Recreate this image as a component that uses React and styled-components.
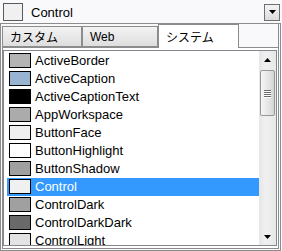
import React from "react";
import styled, { createGlobalStyle } from "styled-components";

const GlobalStyle = createGlobalStyle`
  html, body {
    margin: 0;
    padding: 0;
    background: #ffffff;
  }
  body {
    font-family: "Liberation Sans", "Noto Sans CJK JP", sans-serif;
    color: #000;
  }
`;

const Page = styled.div`
  width: 282px;
  height: 251px;
  background: #f9f9fc;
  overflow: hidden;
`;

const ComboBar = styled.div`
  display: flex;
  align-items: center;
  height: 23px;
  padding: 0 2px 0 3px;
  box-sizing: border-box;
`;

const BigSwatch = styled.div`
  width: 20px;
  height: 18px;
  box-sizing: border-box;
  border: 1px solid #5a5a5a;
  background: ${(p) => p.$color};
`;

const ComboText = styled.div`
  flex: 1;
  margin-left: 8px;
  padding-top: 2px;
  font-size: 13px;
`;

const DropButton = styled.div`
  width: 16px;
  height: 17px;
  margin-top: 1px;
  box-sizing: border-box;
  border: 1px solid #707070;
  background: linear-gradient(#f4f4f4, #dcdcdc);
  display: flex;
  align-items: center;
  justify-content: center;
`;

const Frame = styled.div`
  width: 281px;
  height: 228px;
  box-sizing: border-box;
  border: 1px solid #8c8c8c;
  padding: 0 1px 1px 1px;
  display: flex;
  flex-direction: column;
`;

const TabStrip = styled.div`
  flex: none;
  display: flex;
  align-items: flex-end;
  height: 23px;
  border-right: 1px solid #8c8c8c;
`;

const Tab = styled.div`
  position: relative;
  z-index: 1;
  box-sizing: border-box;
  width: ${(p) => p.$w}px;
  height: ${(p) => (p.$active ? 24 : 21)}px;
  margin-bottom: ${(p) => (p.$active ? -1 : 0)}px;
  padding-left: 7px;
  display: flex;
  align-items: center;
  font-size: 12px;
  border: 1px solid #8c8c8c;
  border-bottom: ${(p) => (p.$active ? "none" : "1px solid #8c8c8c")};
  background: ${(p) =>
    p.$active ? "#ffffff" : "linear-gradient(#f3f3f3, #dedede)"};
`;

const Panel = styled.div`
  flex: 1;
  min-height: 0;
  display: flex;
  flex-direction: column;
  border: 1px solid #8c8c8c;
  background: #ffffff;
  padding: 2px 1px 2px 0;
`;

const List = styled.div`
  flex: 1;
  min-height: 0;
  display: flex;
  border: 1px solid #828790;
  background: #ffffff;
  overflow: hidden;
`;

const Rows = styled.div`
  flex: 1;
  padding: 1px 0 0 3px;
  overflow: hidden;
`;

const Row = styled.div`
  display: flex;
  align-items: flex-start;
  height: 18px;
  padding-left: 2px;
  background: ${(p) => (p.$selected ? "#3399ff" : "transparent")};
  color: ${(p) => (p.$selected ? "#ffffff" : "#000000")};
`;

const Swatch = styled.div`
  flex: none;
  width: 22px;
  height: 15px;
  margin-top: 1px;
  box-sizing: border-box;
  border: 1px solid #000;
  background: ${(p) => p.$color};
`;

const Label = styled.div`
  margin-left: 4px;
  font-size: 13px;
  line-height: 18px;
  white-space: nowrap;
`;

const ScrollBar = styled.div`
  width: 17px;
  display: flex;
  flex-direction: column;
  align-items: center;
  background: linear-gradient(90deg, #e6e6e6, #f0f0f0 40%, #e8e8e8);
`;

const ArrowButton = styled.div`
  flex: none;
  height: 17px;
  width: 17px;
  display: flex;
  align-items: center;
  justify-content: center;
`;

const Thumb = styled.div`
  flex: none;
  width: 15px;
  height: 46px;
  margin-top: 2px;
  box-sizing: border-box;
  border: 1px solid #979797;
  border-radius: 2px;
  background: linear-gradient(90deg, #f6f6f6, #e6e6e6 50%, #d6d6d6);
  display: flex;
  flex-direction: column;
  align-items: center;
  justify-content: center;
  gap: 1px;
`;

const Grip = styled.div`
  width: 7px;
  height: 1px;
  background: #6a6a6a;
  box-shadow: 0 1px 0 #ffffff;
`;

const Track = styled.div`
  flex: 1;
`;

const Triangle = ({ up }) => (
  <svg width="7" height="4" viewBox="0 0 7 4">
    <polygon points={up ? "3.5,0 7,4 0,4" : "0,0 7,0 3.5,4"} fill="#000" />
  </svg>
);

const colors = [
  ["ActiveBorder", "#b4b4b4"],
  ["ActiveCaption", "#99b4d1"],
  ["ActiveCaptionText", "#000000"],
  ["AppWorkspace", "#ababab"],
  ["ButtonFace", "#f0f0f0"],
  ["ButtonHighlight", "#ffffff"],
  ["ButtonShadow", "#a0a0a0"],
  ["Control", "#f0f0f0"],
  ["ControlDark", "#a0a0a0"],
  ["ControlDarkDark", "#696969"],
  ["ControlLight", "#e3e3e3"],
  ["ControlLightLight", "#ffffff"],
];

const tabs = [
  { name: "カスタム", w: 80 },
  { name: "Web", w: 76 },
  { name: "システム", w: 81, active: true },
];

export default function App() {
  return (
    <Page>
      <GlobalStyle />
      <ComboBar>
        <BigSwatch $color="#f0f0f0" />
        <ComboText>Control</ComboText>
        <DropButton>
          <Triangle />
        </DropButton>
      </ComboBar>
      <Frame>
        <TabStrip>
          {tabs.map((t) => (
            <Tab key={t.name} $w={t.w} $active={t.active}>
              {t.name}
            </Tab>
          ))}
        </TabStrip>
        <Panel>
          <List>
            <Rows>
              {colors.map(([name, c]) => (
                <Row key={name} $selected={name === "Control"}>
                  <Swatch $color={c} />
                  <Label>{name}</Label>
                </Row>
              ))}
            </Rows>
            <ScrollBar>
              <ArrowButton>
                <Triangle up />
              </ArrowButton>
              <Thumb>
                <Grip />
                <Grip />
                <Grip />
                <Grip />
              </Thumb>
              <Track />
              <ArrowButton>
                <Triangle />
              </ArrowButton>
            </ScrollBar>
          </List>
        </Panel>
      </Frame>
    </Page>
  );
}
